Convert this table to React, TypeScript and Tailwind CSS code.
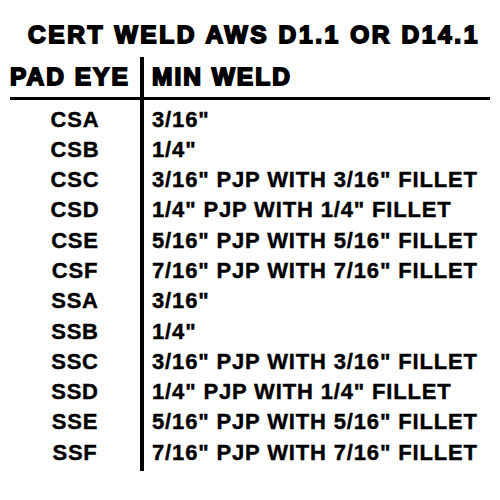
const rows: [string, string][] = [
  ['CSA', '3/16"'],
  ['CSB', '1/4"'],
  ['CSC', '3/16" PJP WITH 3/16" FILLET'],
  ['CSD', '1/4" PJP WITH 1/4" FILLET'],
  ['CSE', '5/16" PJP WITH 5/16" FILLET'],
  ['CSF', '7/16" PJP WITH 7/16" FILLET'],
  ['SSA', '3/16"'],
  ['SSB', '1/4"'],
  ['SSC', '3/16" PJP WITH 3/16" FILLET'],
  ['SSD', '1/4" PJP WITH 1/4" FILLET'],
  ['SSE', '5/16" PJP WITH 5/16" FILLET'],
  ['SSF', '7/16" PJP WITH 7/16" FILLET'],
];

export default function App() {
  return (
    <div className="w-[500px] h-[500px] bg-white text-black font-['Liberation_Sans',Arial,sans-serif] font-bold">
      <div className="pt-[19px] pl-[8px] h-[57px] text-center text-[24.5px] leading-[32px] tracking-[2.6px] whitespace-nowrap [-webkit-text-stroke:1.8px_black]">
        CERT WELD AWS D1.1 OR D14.1
      </div>
      <div className="px-[10px]">
        <div className="flex h-[40px] items-center text-[24.5px] leading-[40px] tracking-[2px] [-webkit-text-stroke:1.8px_black]">
          <div className="w-[130px] h-full text-left">PAD EYE</div>
          <div className="w-[4px] h-full bg-black" />
          <div className="pl-[8px]">MIN WELD</div>
        </div>
        <div className="h-[3px] bg-black" />
        <div className="flex">
          <div className="w-[130px] pt-[4.5px] pb-[3px] text-center text-[22px] leading-[30.3px] tracking-[0.8px] [-webkit-text-stroke:0.4px_black]">
            {rows.map(([pad]) => (
              <div key={pad}>{pad}</div>
            ))}
          </div>
          <div className="w-[4px] bg-black" />
          <div className="pl-[8px] pt-[4.5px] text-[22px] leading-[30.3px] tracking-[0.85px] whitespace-nowrap [-webkit-text-stroke:0.4px_black]">
            {rows.map(([pad, weld]) => (
              <div key={pad}>{weld}</div>
            ))}
          </div>
        </div>
      </div>
    </div>
  );
}
